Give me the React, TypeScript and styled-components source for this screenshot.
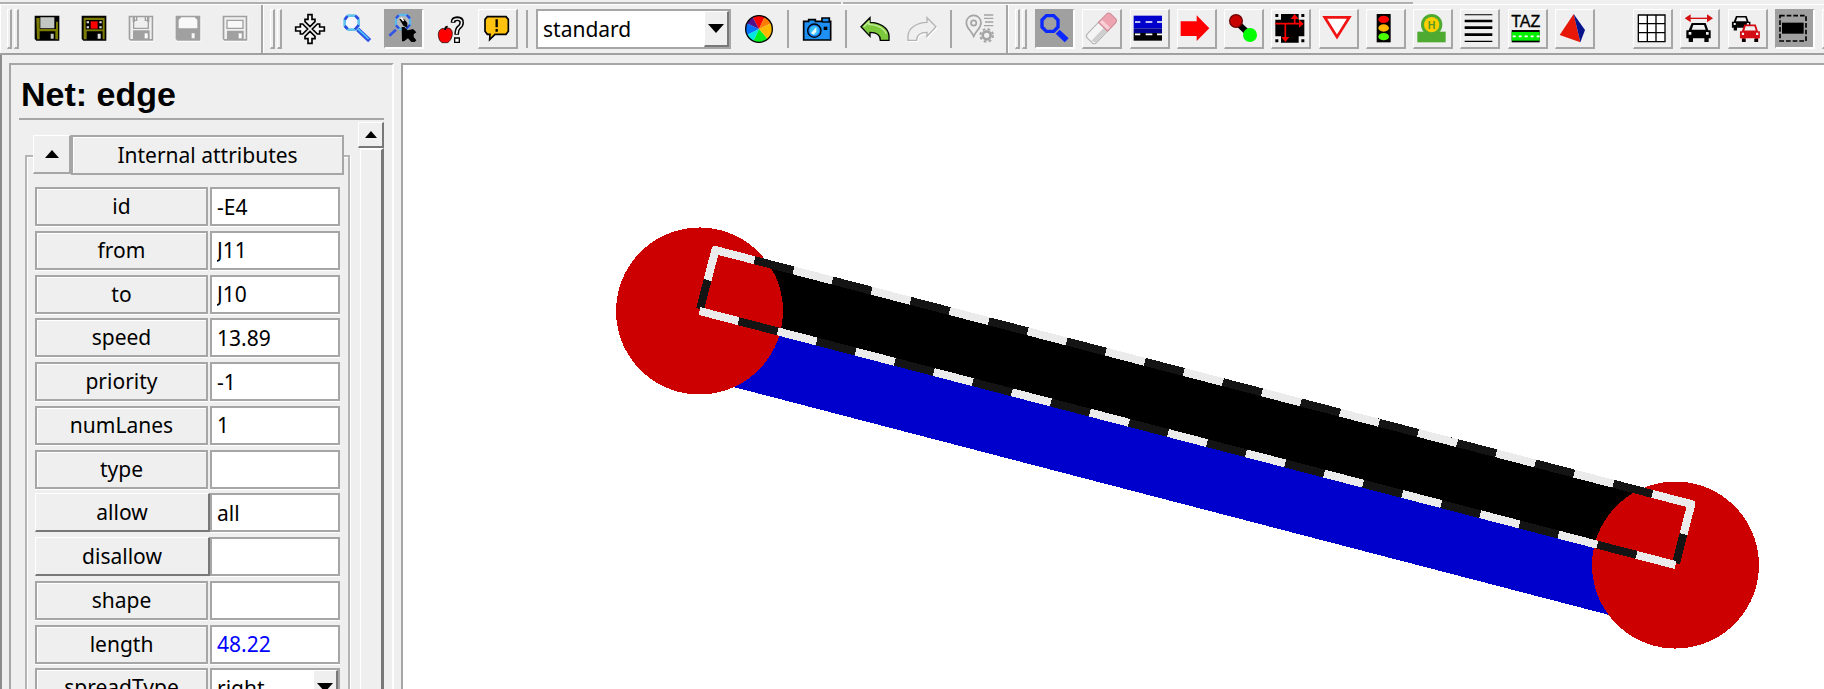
import React from "react";
import styled, { createGlobalStyle, css } from "styled-components";

const FACE = "#efefef";
const SHADE = "#a6a6a6";
const DARK = "#787878";

const GlobalStyle = createGlobalStyle`
  * { box-sizing: border-box; }
  body { margin: 0; background: ${FACE}; }
  body, button, input, select {
    font-family: "Noto Sans", "Open Sans", sans-serif;
    font-size: 21px;
    color: #000;
  }
`;

const Window = styled.div`
  display: flex;
  flex-direction: column;
  height: 100vh;
  overflow: hidden;
  background: ${FACE};
`;

const MenuEdge = styled.div`
  display: flex;
  gap: 2px;
  height: 5px;
  padding-top: 2px;
  flex: none;
  border-bottom: 1px solid #fff;
`;

const MenuEdgePart = styled.div<{ $width: number }>`
  flex: 0 0 ${(p) => p.$width}px;
  height: 2px;
  background: #b0b0b0;
`;

const ToolbarRow = styled.header`
  display: flex;
  flex: none;
  height: 50px;
  overflow: hidden;
  border-bottom: 2px solid #a0a0a0;
`;

const ToolGroup = styled.div<{ $last?: boolean }>`
  display: flex;
  align-items: center;
  flex: ${(p) => (p.$last ? "1 0 auto" : "none")};
  gap: 8px;
  padding: 0 6px;
  border-left: 1px solid #fff;
  border-right: ${(p) => (p.$last ? "none" : `2px solid ${SHADE}`)};
`;

const GripPair = styled.div`
  display: flex;
  gap: 2px;
`;

const GripBar = styled.div`
  width: 5px;
  height: 40px;
  border: solid;
  border-width: 1px 2px 2px 1px;
  border-color: #fff ${SHADE} ${SHADE} #fff;
`;

const ButtonRun = styled.div<{ $width?: number; $before?: number }>`
  display: flex;
  flex: none;
  gap: 7px;
  margin-left: ${(p) => p.$before ?? 0}px;
  ${(p) => p.$width && css`width: ${p.$width}px; gap: 0; justify-content: space-between;`}
`;

type Look = "flat" | "raised" | "pressed";

const ToolButton = styled.button<{ $look: Look }>`
  display: flex;
  align-items: center;
  justify-content: center;
  flex: none;
  width: 40px;
  height: 40px;
  padding: 0;
  border: solid;
  border-width: 1px 2px 2px 1px;
  border-color: transparent;
  background: ${FACE};
  ${(p) => p.$look === "raised" && css`border-color: #fff ${SHADE} ${SHADE} #fff;`}
  ${(p) => p.$look === "pressed" && css`background: #a0a0a0; border-color: #a0a0a0 #fff #fff #a0a0a0;`}
`;

const Glyph = styled.svg`
  display: block;
  width: 28px;
  height: 28px;
  overflow: visible;
`;

const Separator = styled.div`
  width: 2px;
  height: 38px;
  background: ${SHADE};
`;

const ComboFrame = styled.div<{ $width: number; $height: number }>`
  display: flex;
  position: relative;
  width: ${(p) => p.$width}px;
  height: ${(p) => p.$height}px;
  background: #fff;
  border: 2px solid ${SHADE};
`;

const ComboSelect = styled.select`
  appearance: none;
  flex: 1;
  min-width: 0;
  padding: 0 0 0 5px;
  border: 0;
  border-radius: 0;
  background: transparent;
`;

const ComboArrow = styled.span`
  position: absolute;
  top: 0;
  right: 0;
  bottom: 0;
  display: flex;
  align-items: center;
  justify-content: center;
  width: 25px;
  background: ${FACE};
  border: solid;
  border-width: 1px 2px 2px 1px;
  border-color: #fff ${DARK} ${DARK} #fff;
  pointer-events: none;
`;

const Triangle = styled.span<{ $up?: boolean; $half: number; $tall: number }>`
  width: 0;
  height: 0;
  border: solid transparent;
  border-width: 0 ${(p) => p.$half}px;
  ${(p) => (p.$up ? "border-bottom" : "border-top")}: ${(p) => p.$tall}px solid #000;
`;

const Workspace = styled.main`
  display: flex;
  flex: 1;
  min-height: 0;
  gap: 7px;
  padding: 8px 0 0 7px;
  border-left: 2px solid #8c8c8c;
`;

const Sidebar = styled.aside`
  display: flex;
  flex-direction: column;
  flex: 0 0 385px;
  min-height: 0;
  padding: 0 8px;
  overflow: hidden;
  border: solid;
  border-width: 2px 2px 0;
  border-color: ${SHADE} #fff #fff ${SHADE};
`;

const Title = styled.h1`
  margin: 0;
  padding: 9px 0 0 2px;
  height: 55px;
  flex: none;
  font: bold 34px/40px "Liberation Sans", Arial, sans-serif;
  border-bottom: 2px solid ${SHADE};
`;

const ScrollRegion = styled.div`
  display: flex;
  flex: 1;
  min-height: 0;
  justify-content: space-between;
`;

const GroupBox = styled.section`
  align-self: flex-start;
  width: 325px;
  margin: 35px 0 0 6px;
  padding: 0 8px;
  border: 2px solid #b4b4b4;
  box-shadow: inset 1px 1px #fff, 1px 1px #fff;
`;

const GroupHeader = styled.div`
  display: flex;
  margin: -22px -4px 12px -2px;
  background: ${FACE};
`;

const CollapseButton = styled.button`
  display: flex;
  align-items: center;
  justify-content: center;
  width: 38px;
  height: 39px;
  padding: 0;
  background: ${FACE};
  border: solid;
  border-width: 1px 2px 2px 1px;
  border-color: #fff ${SHADE} ${SHADE} #fff;
`;

const GroupTitle = styled.h2`
  flex: 1;
  margin: 0;
  font-size: 21px;
  font-weight: 400;
  line-height: 36px;
  text-align: center;
  border: 2px solid ${SHADE};
  box-shadow: inset 1px 1px #fff;
`;

const AttributeRows = styled.div`
  display: grid;
  grid-template-rows: repeat(12, 1fr);
  height: 525px;
`;

const Row = styled.div`
  display: flex;
  gap: 2px;
  height: 39px;
`;

const nameBox = css`
  flex: 0 0 173px;
  padding: 0;
  line-height: 35px;
  text-align: center;
  background: ${FACE};
`;

const Name = styled.label`
  ${nameBox}
  border: 2px solid ${SHADE};
  box-shadow: inset 1px 1px #fff, 0 1px #fff;
`;

const NameButton = styled.button`
  ${nameBox}
  flex-basis: 175px;
  margin-right: -2px;
  border: solid;
  border-width: 1px 2px 2px 1px;
  border-color: #fff ${DARK} ${DARK} #fff;
`;

const Value = styled.input<{ $blue?: boolean }>`
  flex: 0 0 130px;
  min-width: 0;
  padding: 0 5px;
  border: 2px solid ${SHADE};
  border-radius: 0;
  background: #fff;
  box-shadow: 0 1px #fff;
  color: ${(p) => (p.$blue ? "#0000ff" : "#000")};
`;

const ScrollBar = styled.div`
  display: flex;
  flex-direction: column;
  flex: 0 0 26px;
  padding-top: 2px;
`;

const ScrollUp = styled.button`
  display: flex;
  align-items: center;
  justify-content: center;
  flex: none;
  height: 26px;
  padding: 0;
  background: ${FACE};
  border: solid;
  border-width: 1px 2px 2px 1px;
  border-color: #fff ${DARK} ${DARK} #fff;
`;

const ScrollThumb = styled.div`
  flex: 1;
  margin-left: 2px;
  border: solid;
  border-width: 2px 3px 0 1px;
  border-color: #fff ${DARK} ${DARK} #fff;
`;

const Canvas = styled.section`
  flex: 1;
  min-width: 0;
  overflow: hidden;
  background: #fff;
  border: solid ${SHADE};
  border-width: 2px 0 0 2px;
`;

const Drawing = styled.svg`
  display: block;
  width: 1421px;
  height: 624px;
`;

/* ---- toolbar icons, drawn on an 84-unit square ---- */

const wedge = (a: number, b: number) => {
  const at = (d: number) => {
    const r = (d * Math.PI) / 180;
    return `${42 + 40 * Math.sin(r)} ${42 - 40 * Math.cos(r)}`;
  };
  return `M42 42L${at(a)}A40 40 0 0 1 ${at(b)}Z`;
};

const WHEEL: [number, number, string][] = [
  [-28, 25, "#ff0000"],
  [25, 65, "#ff7a00"],
  [65, 140, "#ffb800"],
  [140, 205, "#00f020"],
  [205, 245, "#00e8e0"],
  [245, 295, "#0070ff"],
  [295, 332, "#50108c"],
];

const Car = ({ color = "#000" }: { color?: string }) => (
  <>
    <path fill={color} d="M17 24h42l8 22h7v24h-6v11H55V70H21v11H8V70H1V46h7z" />
    <path fill={FACE} d="M22 30h32l5 14H17zM8 51h8v8H8zM60 51h8v8h-8z" />
  </>
);

const redoPath = "M84 35L57 8v14C28 22 2 38 0 62v14h26c0-12 8-24 31-24v12z";

const icons: Record<string, React.ReactNode> = {
  save: (
    <>
      <path fill="#000" d="M5 2h74v75H10l-5-5z" />
      <path fill="#7c7c00" d="M10 9h10v33h49V20h6v53h-8V49H20v24h-8z" />
      <path fill="#c3c7c3" d="M22 7h42v33H22zM53 56h9v15h-9z" />
    </>
  ),
  saveNet: (
    <>
      <path fill="#000" d="M5 2h74v75H10l-5-5z" />
      <path fill="#7c7c00" d="M11 8h63v65h-6V49H20v24h-9z" />
      <path fill="#000" d="M17 15h51v28H17z" />
      <path fill="#f00" d="M32 19h21v22H32z" />
      <path fill="#ddd" d="M20 19h7v6h-7zM20 34h7v6h-7zM58 19h7v6h-7zM58 34h7v6h-7zM53 56h9v15h-9z" />
    </>
  ),
  saveOff1: (
    <>
      <path fill="#fff" d="M8 5h74v75H8z" />
      <path fill="#a0a0a0" d="M5 2h74v75H10l-5-5z" />
      <path fill={FACE} d="M10 7h7v14h7V7h36v14h7V7h7v65h-6V46H18v26h-8z" />
      <path fill="none" stroke="#a0a0a0" strokeWidth="4" d="M29 5v11h-9v24h44V16h-9V5" />
      <path fill="#fff" d="M53 55h9v15h-9z" />
    </>
  ),
  saveOff2: (
    <>
      <path fill="#fff" d="M8 5h74v75H8z" />
      <path fill="#a0a0a0" d="M5 2h74v75H10l-5-5z" />
      <path fill="#f8f8f8" d="M22 7h40l8 8v25H14V15zM53 55h9v15h-9z" />
    </>
  ),
  saveOff3: (
    <>
      <path fill="#fff" d="M8 5h74v75H8z" />
      <path fill="#a0a0a0" d="M5 2h74v75H10l-5-5z" />
      <path fill={FACE} d="M10 7h64v65h-6V47H18v25h-8z" />
      <path fill="#f8f8f8" stroke="#a0a0a0" strokeWidth="4" d="M18 16h48v24H18z" />
      <path fill="#fff" d="M53 55h9v15h-9z" />
    </>
  ),
  move: (
    <>
      {[0, 90, 180, 270].map((a) => (
        <path
          key={a}
          transform={`rotate(${a} 42 42)`}
          d="M36-1h12v14h9v7L42 35L27 20v-7h9z"
          fill="#f4f4f4"
          stroke="#000"
          strokeWidth="5"
        />
      ))}
    </>
  ),
  zoom: (
    <>
      <path d="M44 43L80 77" stroke="#2f50e8" strokeWidth="13" />
      <path d="M44 41L77 72" stroke="#50c8f4" strokeWidth="5" />
      <path d="M16 2h20l11 12v18L36 44H16L5 32V14z" fill="#f6f6fa" stroke="#62c4ee" strokeWidth="8" />
      <path d="M13 3L5 14M47 30L36 43M37 2l10 10M5 33l9 9" stroke="#304ce0" strokeWidth="8" />
    </>
  ),
  inspectCursor: (
    <>
      <path d="M18 44L-2 62" stroke="#3454e4" strokeWidth="8" />
      <path d="M29 0h20l11 11v19L49 42H29L18 30V11z" fill="#b8b8b8" stroke="#5cb8e8" strokeWidth="7" />
      <path d="M26 1l-8 9M60 29L49 41M50 0l10 10M18 31l9 9" stroke="#304ce0" strokeWidth="7" />
      <path d="M28 12h14l10 12v14l-12-6z" fill="#000" />
      <path d="M35 36h8l10 10 16-4 10 10-8 6v8l8 10-5 5H64L54 70l-12 9h-6z" fill="#000" />
      <path d="M33 8l8 10" stroke="#fff" strokeWidth="5" />
    </>
  ),
  help: (
    <>
      <path d="M24 42c10-7 22-1 22 13 0 13-8 26-15 28H16C9 81 4 70 4 58c0-14 12-21 20-16z" fill="#f00" stroke="#000" strokeWidth="2" />
      <path d="M24 45q0-10 8-10" fill="none" stroke="#000" strokeWidth="5" />
      <path d="M48 23q0-12 13-12t13 12q0 8-8 14-7 6-7 22" fill="none" stroke="#000" strokeWidth="14" />
      <path d="M48 21q0-9 13-9t13 11q0 8-8 14-7 6-7 20" fill="none" stroke="#f4f4f4" strokeWidth="5" />
      <path d="M53 69h14v13H53z" fill="#fff" stroke="#000" strokeWidth="4" />
    </>
  ),
  message: (
    <>
      <path d="M10 5h56l7 8v36l-7 9H33L17 74l1-16h-8l-7-9V13z" fill="#ffc20e" stroke="#000" strokeWidth="5" />
      <path d="M38 13v24M38 42v8" stroke="#000" strokeWidth="7" />
    </>
  ),
  wheel: (
    <>
      {WHEEL.map(([a, b, c]) => (
        <path key={a} d={wedge(a, b)} fill={c} />
      ))}
      <circle cx="42" cy="42" r="40" fill="none" stroke="#000" strokeWidth="4" />
    </>
  ),
  camera: (
    <>
      <path d="M2 19h15v-5h20v5h20V9h22v10h4v56H2z" fill="#1e90f4" stroke="#000" strokeWidth="5" />
      <path d="M57 21h26" stroke="#000" strokeWidth="4" />
      <circle cx="34" cy="47" r="20" fill="#1a7cf0" stroke="#000" strokeWidth="4" />
      <circle cx="34" cy="47" r="14" fill="#38c0fc" />
      <path d="M24 54l16-18v14l-8 9z" fill="#e8faff" />
      <path d="M62 35h11v10H62z" fill="#000" />
    </>
  ),
  undo: (
    <g transform="matrix(-1 0 0 1 84 0)">
      <path d={redoPath} fill="#7cc83c" stroke="#000" strokeWidth="4" />
      <path d="M76 36L60 20v9C38 28 16 38 8 56" fill="none" stroke="#c4ec98" strokeWidth="4" />
    </g>
  ),
  redo: (
    <>
      <path d={redoPath} transform="translate(3 3)" fill="none" stroke="#fff" strokeWidth="4" />
      <path d={redoPath} fill={FACE} stroke="#b4b4b4" strokeWidth="4" />
    </>
  ),
  route: (
    <g fill="none" stroke="#a4a4a4" strokeWidth="5">
      <path d="M23 64C14 44 1 40 1 23a22 22 0 0 1 44 0c0 17-13 21-22 41z" />
      <circle cx="23" cy="24" r="8" />
      <path d="M54 0h28M54 10h28M57 21h25M54 32h28" strokeWidth="4" />
      <circle cx="62" cy="61" r="12" strokeWidth="8" />
      <circle cx="62" cy="61" r="19" strokeWidth="6" strokeDasharray="8 7" />
    </g>
  ),
  inspect: (
    <>
      <path d="M50 50L77 76" stroke="#0a28ff" strokeWidth="17" />
      <path d="M16 2h22l13 13v21L38 49H16L3 36V15z" fill="none" stroke="#0a28ff" strokeWidth="10" />
    </>
  ),
  eraser: (
    <g transform="rotate(-46 40 39)">
      <path d="M-2 21h54v38H-2q-9 0-9-9V30q0-9 9-9z" fill="#f4f4f4" stroke="#b0b0b0" strokeWidth="3" />
      <path d="M-9 44h61v13H-3z" fill="#cecece" />
      <path d="M46 21h34q10 0 10 10v18q0 10-10 10H46z" fill="#eea4b0" stroke="#cc8c98" strokeWidth="3" />
      <path d="M49 24h10v33H49z" fill="#f8d0d6" />
    </g>
  ),
  edge: (
    <>
      <path d="M-4 2h85v38H-4z" fill="#0000cc" />
      <path d="M-4 40h85v14H-4z" fill="#00008c" />
      <path d="M-4 54h85v23H-4z" fill="#000" />
      <path d="M0 21h16M32 21h20M66 21h15M0 58h16M32 58h20M66 58h15" stroke="#fff" strokeWidth="5" />
    </>
  ),
  arrow: <path d="M-4 19h48V1l38 39-38 38V63H-4z" fill="#f00" />,
  connection: (
    <>
      <path d="M24 26L54 54" stroke="#000" strokeWidth="18" />
      <circle cx="18" cy="18" r="19" fill="#c80000" stroke="#700000" strokeWidth="4" />
      <circle cx="60" cy="60" r="21" fill="#0f0" />
    </>
  ),
  prohibition: (
    <>
      <path d="M12-3h53v17h17v50H65v19H12V64H-5V14h17z" fill="#000" />
      <path d="M-5-3H4v9h-9zM73-3h9v9h-9zM-5 73H4v9h-9zM73 73h9v9h-9z" fill="#000" />
      <path d="M-5 26h76M25 26v42M53 26V10" stroke="#f00" strokeWidth="5" fill="none" />
      <path d="M66 14l14 12-14 12zM13 66h24L25 81zM41 12h24L53-3z" fill="#f00" />
    </>
  ),
  yield: <path d="M2 7h74L39 66z" fill="#fff" stroke="#f01414" strokeWidth="8" />,
  light: (
    <>
      <path d="M17-3h42v85H17z" fill="#000" />
      <ellipse cx="38" cy="13" rx="16" ry="11" fill="#f00" />
      <ellipse cx="38" cy="39" rx="16" ry="11" fill="#ffb400" />
      <ellipse cx="38" cy="65" rx="16" ry="11" fill="#4cff00" />
    </>
  ),
  stop: (
    <>
      <path d="M-5 50h85v32H-5z" fill="#4eaa30" />
      <circle cx="38" cy="29" r="32" fill="#4eaa30" />
      <circle cx="38" cy="29" r="23" fill="#fad000" />
      <text x="38" y="41" textAnchor="middle" fontFamily="Liberation Sans, sans-serif" fontWeight="700" fontSize="32" fill="#5a9a20">H</text>
    </>
  ),
  lines: <path d="M-4-2h83v3H-4zM-4 14h83v8H-4zM-4 34h83v8H-4zM-4 55h83v8H-4zM-4 77h83v4H-4z" fill="#000" />,
  taz: (
    <>
      <text x="38" y="37" textAnchor="middle" fontFamily="Liberation Sans, sans-serif" fontSize="48" fill="#000" stroke="#000" strokeWidth="1">TAZ</text>
      <path d="M-4 45h84v37H-4z" fill="#000" />
      <path d="M-4 51h84v26H-4z" fill="#00f000" />
      <path d="M-1 64h82" stroke="#fff" strokeWidth="5" strokeDasharray="9 9" />
    </>
  ),
  pyramid: (
    <>
      <path d="M41-3L-1 60l62 22z" fill="#e81808" />
      <path d="M41-3l34 48-14 37z" fill="#08148c" />
    </>
  ),
  grid: <path d="M-2 0h80v80H-2zM25 0v80M51 0v80M-2 26h80M-2 53h80" fill="#fff" stroke="#000" strokeWidth="4" />,
  carWidth: (
    <>
      <path d="M8 10h60" stroke="#d41010" strokeWidth="4" />
      <path d="M-4 10L14-2v24zM81 10L63-2v24z" fill="#d41010" />
      <Car />
    </>
  ),
  cars: (
    <>
      <g transform="translate(-4 -15) scale(.76)"><Car /></g>
      <g transform="translate(20 7) scale(.82 .9)"><Car color="#d40c14" /></g>
      <path d="M27 71h11v10H27zM64 71h11v10H64z" fill="#000" />
    </>
  ),
  selection: (
    <>
      <path d="M0 2h78v76H0z" fill="none" stroke="#000" strokeWidth="5" strokeDasharray="14 6" />
      <path d="M6 23h65v33H6z" fill="#000" />
    </>
  ),
};

type Tool = [icon: string, label: string, look?: Look];

const Tools = ({ items, width, before }: { items: Tool[]; width?: number; before?: number }) => (
  <ButtonRun $width={width} $before={before}>
    {items.map(([icon, label, look = "flat"]) => (
      <ToolButton key={label} type="button" aria-label={label} $look={look}>
        <Glyph viewBox="0 0 84 84" aria-hidden="true">{icons[icon]}</Glyph>
      </ToolButton>
    ))}
  </ButtonRun>
);

const Grips = () => (
  <GripPair>
    <GripBar />
    <GripBar />
  </GripPair>
);

const FILE_TOOLS: Tool[] = [
  ["save", "Save configuration"],
  ["saveNet", "Save network"],
  ["saveOff1", "Save additionals"],
  ["saveOff2", "Save demand"],
  ["saveOff3", "Save data"],
];

const VIEW_TOOLS: Tool[] = [
  ["move", "Recenter view"],
  ["zoom", "Zoom"],
  ["inspectCursor", "Zoom style", "pressed"],
  ["help", "Tooltips"],
  ["message", "Messages", "raised"],
];

const MODE_TOOLS: Tool[] = [
  ["inspect", "Inspect", "pressed"],
  ["eraser", "Delete", "raised"],
  ["edge", "Create edge", "raised"],
  ["arrow", "Move", "raised"],
  ["connection", "Connections", "raised"],
  ["prohibition", "Prohibitions", "raised"],
  ["yield", "Junction type", "raised"],
  ["light", "Traffic lights", "raised"],
  ["stop", "Additionals", "raised"],
  ["lines", "Crossings", "raised"],
  ["taz", "Zones", "raised"],
  ["pyramid", "Shapes", "raised"],
];

const OPTION_TOOLS: Tool[] = [
  ["grid", "Grid", "raised"],
  ["carWidth", "Spread vehicles", "raised"],
  ["cars", "Show demand", "raised"],
  ["selection", "Select edges", "pressed"],
  ["blank", "More options", "raised"],
];

interface Attribute {
  name: string;
  value: string;
  button?: boolean;
  blue?: boolean;
}

const ATTRIBUTES: Attribute[] = [
  { name: "id", value: "-E4" },
  { name: "from", value: "J11" },
  { name: "to", value: "J10" },
  { name: "speed", value: "13.89" },
  { name: "priority", value: "-1" },
  { name: "numLanes", value: "1" },
  { name: "type", value: "" },
  { name: "allow", value: "all", button: true },
  { name: "disallow", value: "", button: true },
  { name: "shape", value: "" },
  { name: "length", value: "48.22", blue: true },
];

const LENGTH = 1008.5;
const DASH = LENGTH / 25;

const Network = () => (
  <Drawing viewBox="0 0 1421 624" shapeRendering="crispEdges" role="img" aria-label="Edge between junctions J11 and J10">
    <g transform="translate(296.5 246) rotate(14.59)">
      <rect x="0" y="0" width={LENGTH} height="65" fill="#0000cc" />
      <rect x="0" y="-64" width={LENGTH} height="64" fill="#000" />
      <circle cx="0" cy="0" r="83.5" fill="#cc0000" />
      <circle cx={LENGTH} cy="0" r="83.5" fill="#cc0000" />
      <g fill="none" stroke="#141414" strokeWidth="8">
        <path d={`M0 0H${LENGTH}M0-63H${LENGTH}`} />
        <path d={`M0-32V-2M${LENGTH}-32V-2`} />
      </g>
      <g fill="none" stroke="#ebebeb" strokeWidth="8">
        <path d={`M0 0H${LENGTH}M0-63H${LENGTH}`} strokeDasharray={DASH} />
        <path d={`M0-32V-63H8M${LENGTH}-32V-63h-8`} strokeLinejoin="round" />
      </g>
    </g>
  </Drawing>
);

export default function App() {
  return (
    <Window>
      <GlobalStyle />
      <MenuEdge>
        <MenuEdgePart $width={841} />
        <MenuEdgePart $width={570} />
      </MenuEdge>
      <ToolbarRow>
        <ToolGroup>
          <Grips />
          <Tools items={FILE_TOOLS} />
        </ToolGroup>
        <ToolGroup>
          <Grips />
          <Tools items={VIEW_TOOLS} />
          <Separator />
          <ComboFrame $width={195} $height={40}>
            <ComboSelect aria-label="Coloring scheme" defaultValue="standard">
              <option>standard</option>
            </ComboSelect>
            <ComboArrow><Triangle $half={8} $tall={9} /></ComboArrow>
          </ComboFrame>
          <Tools items={[["wheel", "Edit coloring"]]} />
          <Separator />
          <Tools items={[["camera", "Snapshot"]]} />
          <Separator />
          <Tools items={[["undo", "Undo"], ["redo", "Redo"]]} />
          <Separator />
          <Tools items={[["route", "Compute"]]} />
        </ToolGroup>
        <ToolGroup $last>
          <Grips />
          <Tools items={MODE_TOOLS} width={560} />
          <Tools items={OPTION_TOOLS} width={229} before={30} />
        </ToolGroup>
      </ToolbarRow>
      <Workspace>
        <Sidebar>
          <Title>Net: edge</Title>
          <ScrollRegion>
            <GroupBox>
              <GroupHeader>
                <CollapseButton type="button" aria-label="Collapse">
                  <Triangle $up $half={7} $tall={8} />
                </CollapseButton>
                <GroupTitle>Internal attributes</GroupTitle>
              </GroupHeader>
              <AttributeRows>
                {ATTRIBUTES.map((a) => (
                  <Row key={a.name}>
                    {a.button ? (
                      <NameButton type="button">{a.name}</NameButton>
                    ) : (
                      <Name htmlFor={`attr-${a.name}`}>{a.name}</Name>
                    )}
                    <Value id={`attr-${a.name}`} aria-label={a.name} defaultValue={a.value} $blue={a.blue} />
                  </Row>
                ))}
                <Row>
                  <Name htmlFor="attr-spreadType">spreadType</Name>
                  <ComboFrame $width={130} $height={39}>
                    <ComboSelect id="attr-spreadType" defaultValue="right">
                      <option>right</option>
                    </ComboSelect>
                    <ComboArrow><Triangle $half={8} $tall={9} /></ComboArrow>
                  </ComboFrame>
                </Row>
              </AttributeRows>
            </GroupBox>
            <ScrollBar>
              <ScrollUp type="button" aria-label="Scroll up">
                <Triangle $up $half={6} $tall={7} />
              </ScrollUp>
              <ScrollThumb />
            </ScrollBar>
          </ScrollRegion>
        </Sidebar>
        <Canvas>
          <Network />
        </Canvas>
      </Workspace>
    </Window>
  );
}
